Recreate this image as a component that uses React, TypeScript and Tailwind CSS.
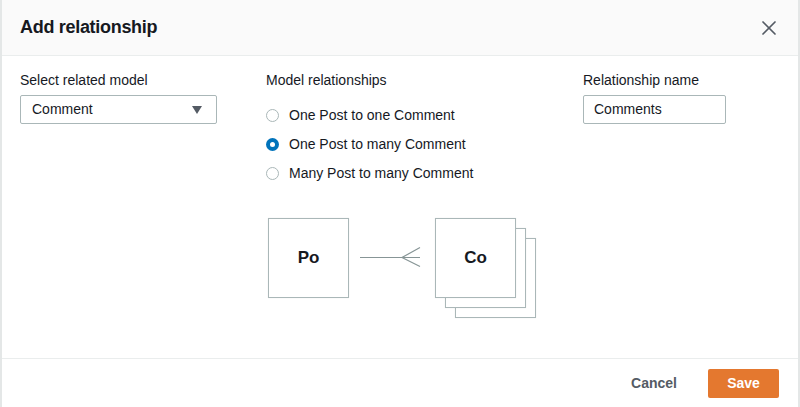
import { X } from "lucide-react";

const options = [
  { label: "One Post to one Comment", checked: false },
  { label: "One Post to many Comment", checked: true },
  { label: "Many Post to many Comment", checked: false },
];

function Radio({ checked }: { checked: boolean }) {
  return checked ? (
    <span className="w-[13px] h-[13px] rounded-full bg-[#0073bb] flex items-center justify-center">
      <span className="w-[5px] h-[5px] rounded-full bg-white" />
    </span>
  ) : (
    <span className="w-[13px] h-[13px] rounded-full border border-[#aab7b8] bg-white" />
  );
}

function Box({ label }: { label: string }) {
  return (
    <div className="w-[81px] h-[80px] border border-[#aab7b8] bg-white flex items-center justify-center text-[17px] font-bold text-[#16191f] shadow-[0_0_1px_rgba(0,0,0,0.1)]">
      {label}
    </div>
  );
}

export default function App() {
  return (
    <div
      className="w-[800px] h-[407px] bg-white border-x-2 border-[#e4e7e7] flex flex-col text-[#16191f]"
      style={{ fontFamily: '"Liberation Sans", Arial, sans-serif' }}
    >
      {/* Header */}
      <div className="h-[56px] shrink-0 bg-[#fafafa] border-b border-[#eaeded] flex items-center justify-between pl-[18px] pr-[17px]">
        <h1 className="text-[18px] font-bold tracking-[-0.3px]">Add relationship</h1>
        <X size={24} strokeWidth={1.7} className="text-[#545b64]" />
      </div>

      {/* Body */}
      <div className="flex-1 grid grid-cols-[246px_317px_1fr] pl-[18px] pt-[15px]">
        <div>
          <div className="text-[14px] leading-[18px]">Select related model</div>
          <div className="mt-[6px] w-[197px] h-[29px] border border-[#aab7b8] rounded-[2px] flex items-center justify-between pl-[11px] pr-[14px] text-[14px]">
            <span>Comment</span>
            <svg width="10" height="8" viewBox="0 0 10 8">
              <path d="M0 0h10L5 8z" fill="#545b64" />
            </svg>
          </div>
        </div>

        <div>
          <div className="text-[14px] leading-[18px]">Model relationships</div>
          <div className="mt-[17px] flex flex-col gap-[11px]">
            {options.map((o) => (
              <div key={o.label} className="flex items-center gap-[10px] text-[14px] leading-[18px]">
                <Radio checked={o.checked} />
                <span>{o.label}</span>
              </div>
            ))}
          </div>

          <div className="mt-[36px] ml-[2px] flex items-start">
            <Box label="Po" />
            <svg width="86" height="80" viewBox="0 0 86 80" className="shrink-0">
              <g stroke="#879596" strokeWidth="1.2" fill="none">
                <path d="M11 39.5h60" />
                <path d="M71 29.5L53 39.5L71 48.5" />
              </g>
            </svg>
            <div className="relative w-[101px] h-[100px]">
              <div className="absolute left-[20px] top-[20px]">
                <Box label="" />
              </div>
              <div className="absolute left-[10px] top-[10px]">
                <Box label="" />
              </div>
              <div className="absolute left-0 top-0">
                <Box label="Co" />
              </div>
            </div>
          </div>
        </div>

        <div>
          <div className="text-[14px] leading-[18px]">Relationship name</div>
          <div className="mt-[6px] w-[143px] h-[29px] border border-[#aab7b8] rounded-[2px] flex items-center pl-[10px] text-[14px]">
            Comments
          </div>
        </div>
      </div>

      {/* Footer */}
      <div className="h-[49px] shrink-0 border-t border-[#eaeded] flex items-center justify-end gap-[31px] pr-[19px]">
        <span className="text-[14px] font-bold text-[#545b64]">Cancel</span>
        <span className="w-[71px] h-[29px] rounded-[2px] bg-[#e4782f] text-white text-[14px] font-bold flex items-center justify-center">
          Save
        </span>
      </div>
    </div>
  );
}
